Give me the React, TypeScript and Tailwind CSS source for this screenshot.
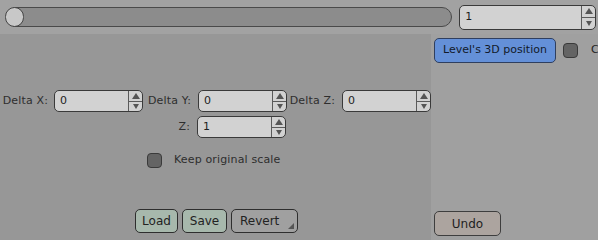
import React from "react";

const font = { fontFamily: '"DejaVu Sans", "Liberation Sans", sans-serif' };

function Spin({ value, className }: { value: string; className: string }) {
  return (
    <div
      className={`flex h-[22px] rounded-[5px] border border-[#3a3a3a] bg-[#d2d2d2] overflow-hidden ${className}`}
    >
      <div className="flex-1 flex items-center pl-[5px] text-[11px] text-[#1e1e1e]">{value}</div>
      <div className="w-[14px] flex flex-col border-l border-[#5a5a5a]">
        <div className="flex-1 flex items-center justify-center border-b border-[#5a5a5a]">
          <div className="w-0 h-0 border-l-[4px] border-r-[4px] border-b-[6px] border-l-transparent border-r-transparent border-b-[#555]" />
        </div>
        <div className="flex-1 flex items-center justify-center">
          <div className="w-0 h-0 border-l-[3px] border-r-[3px] border-t-[5px] border-l-transparent border-r-transparent border-t-[#555]" />
        </div>
      </div>
    </div>
  );
}

function Label({ text, className }: { text: string; className: string }) {
  return (
    <span className={`text-[11px] tracking-[0.15px] text-[#2e2e2e] text-right ${className}`}>{text}</span>
  );
}

export default function App() {
  return (
    <div style={font} className="w-[598px] h-[240px] flex flex-col bg-[#a0a0a0] overflow-hidden">
      <div className="h-[34px] flex items-center bg-[#a2a2a2] pl-[5px] pr-[2px]">
        <div className="relative flex items-center w-[448px] h-[20px]">
          <div className="ml-[8px] flex-1 h-[20px] rounded-r-[10px] border border-[#4a4a4a] bg-[#8c8c8c]" />
          <div className="absolute left-0 top-0 w-[19px] h-[20px] rounded-full border border-[#444] bg-[#c8c8c8]" />
        </div>
        <Spin value="1" className="ml-[7px] w-[137px] h-[25px]" />
      </div>
      <div className="flex-1 flex">
        <div className="w-[433px] bg-[#979797] flex flex-col pt-[56px]">
          <div className="flex items-center">
            <Label text="Delta X:" className="w-[48px]" />
            <Spin value="0" className="ml-[6px] w-[89px]" />
            <Label text="Delta Y:" className="w-[48px]" />
            <Spin value="0" className="ml-[7px] w-[89px]" />
            <Label text="Delta Z:" className="w-[48px]" />
            <Spin value="0" className="ml-[7px] w-[89px]" />
          </div>
          <div className="flex items-center mt-[4px]">
            <Label text="Z:" className="w-[190px]" />
            <Spin value="1" className="ml-[7px] w-[89px]" />
          </div>
          <div className="flex items-center mt-[14px] pl-[147px]">
            <div className="w-[15px] h-[15px] rounded-[4px] border border-[#3a3a3a] bg-[#646464]" />
            <span className="ml-[12px] text-[11px] tracking-[0.15px] text-[#2e2e2e]">Keep original scale</span>
          </div>
          <div className="flex items-center mt-[40px] pl-[135px] gap-[4px]">
            <button className="h-[24px] w-[43px] rounded-[5px] border border-[#2e2e2e] bg-[#a7b8ac] text-[12px] text-[#222]">
              Load
            </button>
            <button className="h-[24px] w-[45px] rounded-[5px] border border-[#2e2e2e] bg-[#a7b8ac] text-[12px] text-[#222]">
              Save
            </button>
            <button className="relative h-[24px] w-[67px] rounded-[5px] border border-[#2e2e2e] bg-[#a0a0a0] text-[12px] text-[#222] text-left pl-[8px]">
              Revert
              <span className="absolute right-[3px] bottom-[3px] w-0 h-0 border-b-[6px] border-l-[6px] border-l-transparent border-b-[#555]" />
            </button>
          </div>
        </div>
        <div className="flex-1 flex flex-col pl-[3px] pt-[4px] pb-[4px] bg-[#a0a0a0]">
          <div className="flex items-center">
            <div className="h-[25px] w-[122px] rounded-[5px] border border-[#2f3f5f] bg-[#6490d8] flex items-center justify-center text-[11px] text-[#121a2a]">
              Level's 3D position
            </div>
            <div className="ml-[7px] w-[15px] h-[15px] rounded-[4px] border border-[#3a3a3a] bg-[#646464]" />
            <span className="ml-[13px] text-[11px] text-[#222]">C</span>
          </div>
          <div className="mt-auto">
            <button className="h-[25px] w-[67px] rounded-[5px] border border-[#3e3e3e] bg-[#aca49f] text-[12px] text-[#1e1e1e]">
              Undo
            </button>
          </div>
        </div>
      </div>
    </div>
  );
}
